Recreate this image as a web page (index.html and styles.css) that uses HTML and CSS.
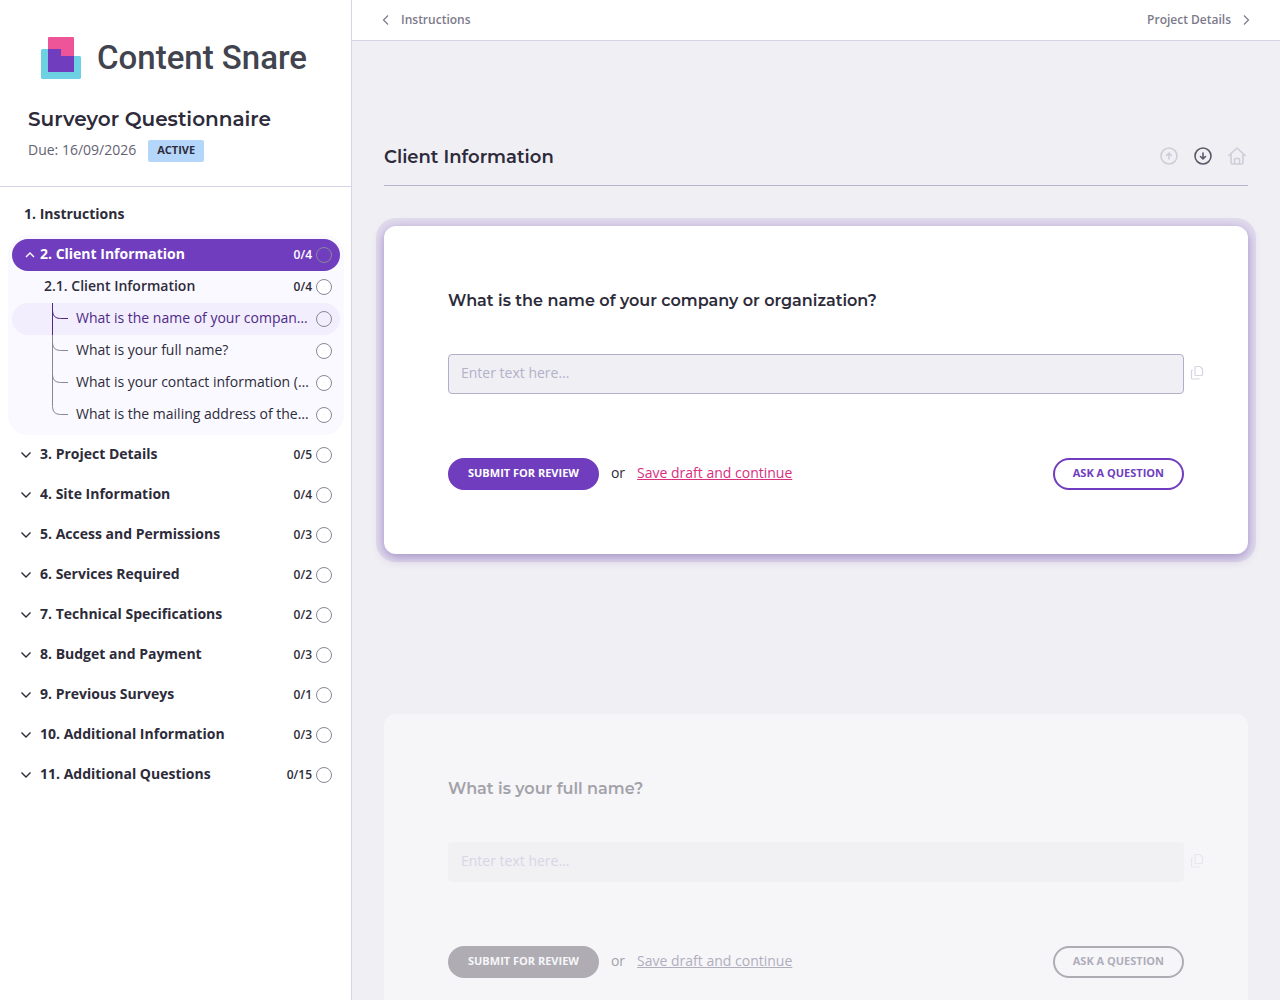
FILE: index.html
```html
<!DOCTYPE html>
<html lang="en">
  <head>
    <meta charset="utf-8" />
    <meta name="viewport" content="width=device-width, initial-scale=1" />
    <title>Surveyor Questionnaire</title>
    <link rel="stylesheet" href="styles.css">
  </head>
  <body>
    <!-- Shared icons -->
    <svg class="icon-defs" aria-hidden="true">
      <symbol id="chevron-down" viewBox="0 0 12 12"><path d="M1.5 3.5 6 8l4.5-4.5" /></symbol>
      <symbol id="chevron-up" viewBox="0 0 12 12"><path d="M2 8l4-4 4 4" /></symbol>
      <symbol id="branch" viewBox="0 0 16 32"><path d="M.5 0v32M.5 4v3.500q0 8 8 8H16" /></symbol>
      <symbol id="branch-last" viewBox="0 0 16 32"><path d="M.5 0v7.500q0 8 8 8H16" /></symbol>
      <symbol id="copy" viewBox="0 0 14 16"><path d="M6 1.500h4l2.500 2.500v5.500q0 1-1 1H6q-1 0-1-1v-7q0-1 1-1zM3 5H2.500q-1 0-1 1v7q0 1 1 1H8q1 0 1-1" /></symbol>
    </svg>

    <div class="app">
      <aside class="sidebar">
        <header class="sidebar-header">
          <div class="logo">
            <svg class="logo-mark" viewBox="0 0 40 42" aria-hidden="true">
              <rect x="7" width="26" height="35" rx="1" fill="#ed5598" />
              <path d="M1.500 12H19v7h19.500q1.500 0 1.500 1.500v20q0 1.500-1.500 1.500h-37Q0 42 0 40.500v-27Q0 12 1.500 12z" fill="#6dd0e3" />
              <path d="M7 12h13v7h13v16H7z" fill="#703dbe" />
            </svg>
            <span class="logo-text">Content Snare</span>
          </div>
          <h1 class="request-title">Surveyor Questionnaire</h1>
          <div class="request-meta">
            <span>Due: 16/09/2026</span>
            <span class="badge">ACTIVE</span>
          </div>
        </header>

        <nav aria-label="Pages">
          <ul class="pages">
            <li class="page"><a class="row row-plain" href="#"><span class="label">1. Instructions</span></a></li>
            <li class="page page-open">
              <a class="row row-active" href="#"><svg class="chevron"><use href="#chevron-up" /></svg><span class="label">2. Client Information</span><span class="count">0/4</span><span class="status"></span></a>
              <a class="row row-section" href="#"><span class="label">2.1. Client Information</span><span class="count">0/4</span><span class="status"></span></a>
              <ul class="questions">
                <li><a class="row row-question current" href="#"><svg class="branch"><use href="#branch" /></svg><span class="label">What is the name of your compan…</span><span class="status"></span></a></li>
                <li><a class="row row-question" href="#"><svg class="branch"><use href="#branch" /></svg><span class="label">What is your full name?</span><span class="status"></span></a></li>
                <li><a class="row row-question" href="#"><svg class="branch"><use href="#branch" /></svg><span class="label">What is your contact information (…</span><span class="status"></span></a></li>
                <li><a class="row row-question" href="#"><svg class="branch"><use href="#branch-last" /></svg><span class="label">What is the mailing address of the…</span><span class="status"></span></a></li>
              </ul>
            </li>
            <li class="page"><a class="row" href="#"><svg class="chevron"><use href="#chevron-down" /></svg><span class="label">3. Project Details</span><span class="count">0/5</span><span class="status"></span></a></li>
            <li class="page"><a class="row" href="#"><svg class="chevron"><use href="#chevron-down" /></svg><span class="label">4. Site Information</span><span class="count">0/4</span><span class="status"></span></a></li>
            <li class="page"><a class="row" href="#"><svg class="chevron"><use href="#chevron-down" /></svg><span class="label">5. Access and Permissions</span><span class="count">0/3</span><span class="status"></span></a></li>
            <li class="page"><a class="row" href="#"><svg class="chevron"><use href="#chevron-down" /></svg><span class="label">6. Services Required</span><span class="count">0/2</span><span class="status"></span></a></li>
            <li class="page"><a class="row" href="#"><svg class="chevron"><use href="#chevron-down" /></svg><span class="label">7. Technical Specifications</span><span class="count">0/2</span><span class="status"></span></a></li>
            <li class="page"><a class="row" href="#"><svg class="chevron"><use href="#chevron-down" /></svg><span class="label">8. Budget and Payment</span><span class="count">0/3</span><span class="status"></span></a></li>
            <li class="page"><a class="row" href="#"><svg class="chevron"><use href="#chevron-down" /></svg><span class="label">9. Previous Surveys</span><span class="count">0/1</span><span class="status"></span></a></li>
            <li class="page"><a class="row" href="#"><svg class="chevron"><use href="#chevron-down" /></svg><span class="label">10. Additional Information</span><span class="count">0/3</span><span class="status"></span></a></li>
            <li class="page"><a class="row" href="#"><svg class="chevron"><use href="#chevron-down" /></svg><span class="label">11. Additional Questions</span><span class="count">0/15</span><span class="status"></span></a></li>
          </ul>
        </nav>
      </aside>

      <main class="main">
        <nav class="topbar" aria-label="Previous and next page">
          <a href="#"><svg viewBox="0 0 12 12"><path d="M8 1.500 3.500 6 8 10.500" /></svg>Instructions</a>
          <a href="#">Project Details<svg viewBox="0 0 12 12"><path d="M4 1.500 8.500 6 4 10.500" /></svg></a>
        </nav>

        <div class="content">
          <header class="section-header">
            <h2>Client Information</h2>
            <div class="section-actions">
              <button type="button" class="icon-button" aria-label="Previous question" disabled>
                <svg viewBox="0 0 18 18"><circle cx="9" cy="9" r="8" /><path d="M9 12V6.500M6.500 8.500 9 6l2.500 2.500" /></svg>
              </button>
              <button type="button" class="icon-button" aria-label="Next question">
                <svg viewBox="0 0 18 18"><circle cx="9" cy="9" r="8" /><path d="M9 6v5.500M6.500 9.500 9 12l2.500-2.500" /></svg>
              </button>
              <button type="button" class="icon-button" aria-label="Home" disabled>
                <svg viewBox="0 0 18 18"><path d="M.8 8.500 9 1l8.200 7.500M3 7v8.500q0 1.500 1.500 1.500h9q1.500 0 1.500-1.500V7M6.500 17v-4.500q0-1 1-1h3q1 0 1 1V17" /></svg>
              </button>
            </div>
          </header>

          <form class="card card-focus">
            <label class="question" for="company">What is the name of your company or organization?</label>
            <div class="field">
              <input id="company" type="text" placeholder="Enter text here…">
              <button type="button" class="copy" aria-label="Copy"><svg><use href="#copy" /></svg></button>
            </div>
            <div class="actions">
              <button type="button" class="btn btn-primary">SUBMIT FOR REVIEW</button>
              <span class="or">or</span>
              <a href="#">Save draft and continue</a>
              <button type="button" class="btn btn-outline">ASK A QUESTION</button>
            </div>
          </form>

          <form class="card card-muted">
            <label class="question" for="full-name">What is your full name?</label>
            <div class="field">
              <input id="full-name" type="text" placeholder="Enter text here…">
              <button type="button" class="copy" aria-label="Copy"><svg><use href="#copy" /></svg></button>
            </div>
            <div class="actions">
              <button type="button" class="btn btn-primary">SUBMIT FOR REVIEW</button>
              <span class="or">or</span>
              <a href="#">Save draft and continue</a>
              <button type="button" class="btn btn-outline">ASK A QUESTION</button>
            </div>
          </form>
        </div>
      </main>
    </div>
  </body>
</html>
```
FILE: styles.css
```css
* {
  box-sizing: border-box;
}

body {
  margin: 0;
  background: #f0eff4;
  font-family: "Open Sans", "Noto Sans", sans-serif;
  font-size: 14px;
  line-height: 20px;
  color: #2d2b3a;
}

ul {
  list-style: none;
  margin: 0;
  padding: 0;
}

a {
  color: inherit;
  text-decoration: none;
}

button {
  font: inherit;
  cursor: pointer;
}

svg {
  flex: none;
  fill: none;
  stroke: currentColor;
}

.icon-defs {
  display: none;
}

.app {
  display: flex;
  height: 100vh;
}

/* Sidebar */
.sidebar {
  flex: none;
  width: 352px;
  background: #fff;
  border-right: 1px solid #d7d5e5;
  overflow: hidden;
}

.sidebar-header {
  padding: 36px 28px 24px;
  border-bottom: 1px solid #d7d5e5;
}

.logo {
  display: flex;
  align-items: center;
  gap: 16px;
  height: 44px;
  padding-left: 13px;
}

.logo-mark {
  width: 40px;
  height: 42px;
  stroke: none;
}

.logo-text {
  font-family: Roboto, sans-serif;
  font-size: 33px;
  line-height: 44px;
  font-weight: 500;
  color: #41444f;
  white-space: nowrap;
}

.request-title {
  margin: 24px 0 6px;
  font-family: Montserrat, Inter, sans-serif;
  font-size: 20px;
  line-height: 30px;
  font-weight: 600;
}

.request-meta {
  display: flex;
  align-items: flex-start;
  gap: 12px;
  color: #646273;
}

.badge {
  padding: 0 9px 2px;
  border-radius: 2px;
  background: #b5d6fb;
  color: #2d2b3a;
  font-size: 11px;
  line-height: 20px;
  font-weight: 700;
}

.pages {
  padding: 8px 7px 8px 8px;
}

.page {
  padding: 4px;
}

.page-open {
  border-radius: 20px;
  background: #faf9ff;
}

.row {
  display: flex;
  align-items: center;
  height: 32px;
  padding: 0 8px;
  border-radius: 16px;
  font-weight: 700;
}

.label {
  flex: 1;
  min-width: 0;
  padding-bottom: 2px;
  overflow: hidden;
  white-space: nowrap;
  text-overflow: ellipsis;
}

.count {
  padding: 0 4px 0 8px;
  font-size: 12px;
  font-weight: 600;
}

.status {
  flex: none;
  width: 16px;
  height: 16px;
  border: 1px solid #8a8898;
  border-radius: 50%;
  background: #fff;
}

.chevron {
  width: 12px;
  height: 12px;
  margin-right: 8px;
  stroke-width: 1.4;
}

.row-plain {
  padding-left: 12px;
}

.row-active {
  padding-left: 12px;
  background: #703dbe;
  color: #fff;
}

.row-active .chevron {
  margin-right: 4px;
}

.row-active .status,
.current .status {
  background: none;
}

.row-section {
  padding-left: 32px;
  font-weight: 600;
}

.row-question {
  padding-left: 40px;
  font-weight: 400;
}

.row-question .label {
  margin: 0 4px 0 8px;
}

.branch {
  width: 16px;
  height: 32px;
  color: #8a8898;
}

.current {
  background: #f2eefd;
  color: #4f2a86;
}

.current .branch {
  color: #4f2a86;
}

/* Main column */
.main {
  flex: 1;
  min-width: 0;
  overflow: hidden;
}

.topbar {
  display: flex;
  justify-content: space-between;
  padding: 10px 28px;
  background: #fff;
  border-bottom: 1px solid #d7d5e5;
  color: #7c7a8a;
  font-size: 12px;
  font-weight: 600;
}

.topbar a {
  display: flex;
  align-items: center;
  gap: 9px;
}

.topbar svg {
  width: 12px;
  height: 12px;
  stroke-width: 1.2;
}

.content {
  padding: 100px 32px 32px;
}

.section-header {
  display: flex;
  align-items: center;
  justify-content: space-between;
  margin-bottom: 40px;
  padding-bottom: 12px;
  border-bottom: 1px solid #b7b5cb;
}

.section-header h2 {
  margin: 0;
  font-family: Montserrat, Inter, sans-serif;
  font-size: 18px;
  line-height: 32px;
  font-weight: 600;
}

.section-actions {
  display: flex;
  gap: 12px;
  padding-bottom: 2px;
}

.icon-button {
  display: flex;
  padding: 0 2px;
  border: 0;
  background: none;
  color: #5b5968;
}

.icon-button:disabled {
  color: #cfcdd9;
}

.icon-button svg {
  width: 18px;
  height: 18px;
  stroke-width: 1.6;
  stroke-linecap: round;
  stroke-linejoin: round;
}

.card {
  margin-bottom: 160px;
  padding: 64px;
  border-radius: 12px;
  background: #fff;
}

.card-focus {
  box-shadow: 0 0 0 8px rgba(112, 61, 190, 0.1), 0 3px 12px rgba(76, 40, 140, 0.45);
}

.question {
  display: block;
  margin-bottom: 42px;
  font-family: Montserrat, Inter, sans-serif;
  font-size: 16px;
  line-height: 22px;
  font-weight: 600;
}

.field {
  display: flex;
  align-items: center;
  gap: 6px;
  margin-right: -20px;
}

.field input {
  flex: 1;
  min-width: 0;
  height: 40px;
  padding: 0 12px 3px;
  border: 1px solid #b1b0ca;
  border-radius: 4px;
  background: #f0eff4;
  font: inherit;
  color: inherit;
}

.field input::placeholder {
  color: #b3b1c9;
  opacity: 1;
}

.copy {
  display: flex;
  padding: 0 0 2px;
  border: 0;
  background: none;
  color: #d7d5e3;
}

.copy svg {
  width: 14px;
  height: 16px;
  stroke-width: 1.2;
}

.actions {
  display: flex;
  align-items: center;
  gap: 12px;
  margin-top: 64px;
}

.actions .or,
.actions a {
  padding-bottom: 2px;
}

.actions a {
  color: #d8307f;
  text-decoration: underline;
}

.btn {
  height: 32px;
  padding: 0 18px 2px;
  border: 2px solid #703dbe;
  border-radius: 16px;
  font-size: 11px;
  line-height: 16px;
  font-weight: 700;
}

.btn-primary {
  background: #703dbe;
  color: #fff;
}

.btn-outline {
  margin-left: auto;
  background: none;
  color: #703dbe;
}

/* Questions that are not in focus yet */
.card-muted {
  background: #f6f6f9;
  color: #a3a2a9;
}

.card-muted input {
  border-color: #f1f0f3;
  background: #f1f0f3;
}

.card-muted input::placeholder {
  color: #d8d6e6;
}

.card-muted .copy {
  color: #e7e6ee;
}

.card-muted .actions a {
  color: #b0aebd;
}

.card-muted .btn {
  border-color: #afadb3;
}

.card-muted .btn-primary {
  background: #afadb3;
  color: #f6f6f9;
}

.card-muted .btn-outline {
  color: #afadb9;
}
```
